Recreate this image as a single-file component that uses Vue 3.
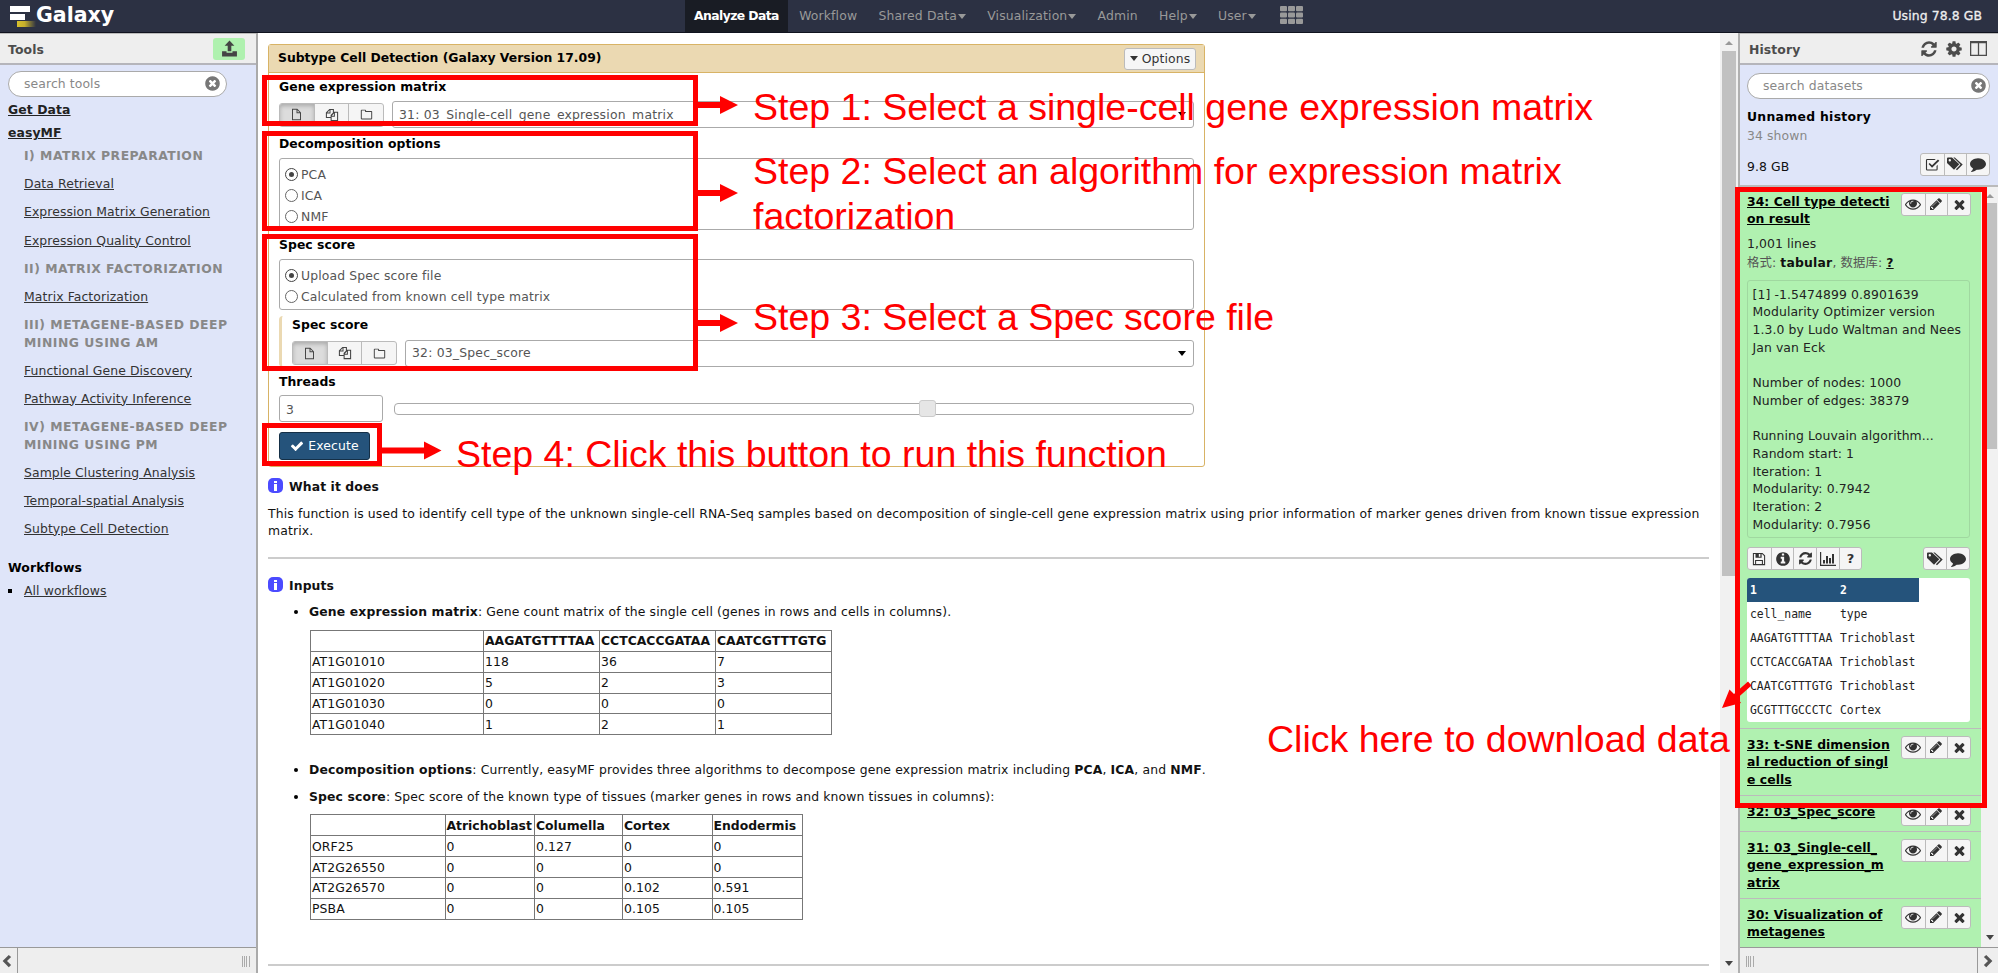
<script setup>
import { h } from 'vue'

const disc = 'm0 0M1664 896q0 209-103 385.5t-279.5 279.5-385.5 103-385.5-103-279.5-279.5-103-385.5 103-385.5 279.5-279.5 385.5-103 385.5 103 279.5 279.5 103 385.5z'
const big = {
  check: 'M1671 566q0 40-28 68l-724 724-136 136q-28 28-68 28t-68-28l-136-136-362-362q-28-28-28-68t28-68l136-136q28-28 68-28t68 28l294 295 656-657q28-28 68-28t68 28l136 136q28 28 28 68z',
  times: 'M1490 1322q0 40-28 68l-136 136q-28 28-68 28t-68-28l-294-294-294 294q-28 28-68 28t-68-28l-136-136q-28-28-28-68t28-68l294-294-294-294q-28-28-28-68t28-68l136-136q28-28 68-28t68 28l294 294 294-294q28-28 68-28t68 28l136 136q28 28 28 68t-28 68l-294 294 294 294q28 28 28 68z',
  pencil: 'M491 1536l91-91-235-235-91 91v107h128v128h107zm523-928q0-22-22-22-10 0-17 7l-542 542q-7 7-7 17 0 22 22 22 10 0 17-7l542-542q7-7 7-17zm-54-192l416 416-832 832h-416v-416zm683 96q0 53-37 90l-166 166-416-416 166-165q36-38 90-38 53 0 91 38l235 234q37 39 37 91z',
  eye: 'M1664 960q-152-236-381-353 61 104 61 225 0 185-131.5 316.5t-316.5 131.5-316.5-131.5-131.5-316.5q0-121 61-225-229 117-381 353 133 205 333.5 326.5t434.5 121.5 434.5-121.5 333.5-326.5zm-720-384q0-20-14-34t-34-14q-125 0-214.5 89.5t-89.5 214.5q0 20 14 34t34 14 34-14 14-34q0-86 61-147t147-61q20 0 34-14t14-34zm848 384q0 34-20 69-140 230-376.5 368.5t-499.5 138.5-499.5-139-376.5-368q-20-35-20-69t20-69q140-229 376.5-368t499.5-139 499.5 139 376.5 368q20 35 20 69z',
  comment: 'M1792 896q0 174-120 321.5t-326 233-450 85.5q-70 0-145-8-198 175-460 242-49 14-114 22-17 2-30.5-9t-17.5-29v-1q-3-4-.5-12t2-10 4.5-9.5l6-9 7-8.5 8-9q7-8 31-34.5t34.5-38 31-39.5 32.5-51 27-59 26-76q-157-89-247.5-220t-90.5-281q0-130 71-248.5t191-204.5 286-136.5 348-50.5q244 0 450 85.5t326 233 120 321.5z',
  refresh: 'M1639 1056q0 5-1 7-64 268-268 434.5t-478 166.5q-146 0-282.5-55t-243.5-157l-129 129q-19 19-45 19t-45-19-19-45v-448q0-26 19-45t45-19h448q26 0 45 19t19 45-19 45l-137 137q71 66 161 102t187 36q134 0 250-65t186-179q11-17 53-117 8-23 30-23h192q13 0 22.5 9.5t9.5 22.5zm25-800v448q0 26-19 45t-45 19h-448q-26 0-45-19t-19-45 19-45l138-138q-148-137-349-137-134 0-250 65t-186 179q-11 17-53 117-8 23-30 23h-199q-13 0-22.5-9.5t-9.5-22.5v-7q65-268 270-434.5t480-166.5q146 0 284 55.5t245 156.5l130-129q19-19 45-19t45 19 19 45z',
  cog: 'M1152 896q0-106-75-181t-181-75-181 75-75 181 75 181 181 75 181-75 75-181zm512-109v222q0 12-8 23t-20 13l-185 28q-19 54-39 91 35 50 107 138 10 12 10 25t-9 23q-27 37-99 108t-94 71q-12 0-26-9l-138-108q-44 23-91 38-16 136-29 186-7 28-36 28h-222q-14 0-24.5-8.5t-11.5-21.5l-28-184q-49-16-90-37l-141 107q-10 9-25 9-14 0-25-11-126-114-165-168-7-10-7-23 0-12 8-23 15-21 51-66.5t54-70.5q-27-50-41-99l-183-27q-13-2-21-12.5t-8-23.5v-222q0-12 8-23t19-13l186-28q14-46 39-92-40-57-107-138-10-12-10-24 0-10 9-23 26-36 98.5-107.5t94.5-71.5q13 0 26 10l138 107q44-23 91-38 16-136 29-186 7-28 36-28h222q14 0 24.5 8.5t11.5 21.5l28 184q49 16 90 37l142-107q9-9 24-9 13 0 25 10 129 119 165 170 7 8 7 22 0 12-8 23-15 21-51 66.5t-54 70.5q26 50 41 98l183 28q13 2 21 12.5t8 23.5z',
  clear: 'M1277 1122q0-26-19-45l-181-181 181-181q19-19 19-45 0-27-19-46l-90-90q-19-19-46-19-26 0-45 19l-181 181-181-181q-19-19-45-19-27 0-46 19l-90 90q-19 19-19 46 0 26 19 45l181 181-181 181q-19 19-19 45 0 27 19 46l90 90q19 19 46 19 26 0 45-19l181-181 181 181q19 19 45 19 27 0 46-19l90-90q19-19 19-46z' + disc,
  info: 'M1152 1376v-160q0-14-9-23t-23-9h-96v-512q0-14-9-23t-23-9h-320q-14 0-23 9t-9 23v160q0 14 9 23t23 9h96v320h-96q-14 0-23 9t-9 23v160q0 14 9 23t23 9h448q14 0 23-9t9-23zm-128-896v-160q0-14-9-23t-23-9h-192q-14 0-23 9t-9 23v160q0 14 9 23t23 9h192q14 0 23-9t9-23z' + disc
}
const small = {
  upload: 'M8 .5L12.6 5.300H9.700V10.500H6.300V5.300H3.400zM1 10.500H5.200V12H10.800V10.500H15V15.500H1z',
  file: 'M2.500 1H9L13.500 5.500V15H2.500zM3.700 2.200V13.800H12.300V6.500H8V2.200zM9.200 2.800V5.300H11.800z',
  files: 'M5 1H10.200V4.200H15V15H6.400V11.500H1V5zM5.200 2.600L2.700 5.200H5.200zM6.300 2.200V6.300H2.200V10.300H6.400V8L9 5.400V2.200zM10.200 6.400L7.800 8.800H10.200zM11.300 5.400V9.900H7.600V13.800H13.800V5.400z',
  folder: 'M1 3Q1 2 2 2H6.500Q7.500 2 7.500 3V3.700H14Q15 3.700 15 4.700V13Q15 14 14 14H2Q1 14 1 13zM2.200 3.200V12.800H13.800V4.900H6.300V3.200z',
  save: 'M1 1H12L15 4V15H1zM2.200 2.200V13.800H3.500V9H12.500V13.800H13.800V4.500L11.500 2.200H11V6.500H4V2.200zM7.800 2.200V5.300H9.600V2.200zM4.700 10.200V13.800H11.300V10.200z',
  chart: 'M0 1H1.200V13.800H16V15H0zM3 9H5V12.600H3zM6 5H8V12.600H6zM9 7H11V12.600H9zM12 3H14V12.600H12z',
  tags: 'M0 2.500Q0 1.500 1 1.500H5L12.300 8.300L7 13.800L0 7zM2.800 3A1.200 1.200 0 1 0 2.800 5.400A1.200 1.200 0 1 0 2.800 3zM6.300 1.500H7.800L15.700 8.500L10 14.300L8.900 13.300L13.500 8.500z',
  checkbox: 'M1 3.500Q1 2 2.500 2H11.500L10.200 3.200H2.200V13.300H12.300V9.500L13.500 8.300V13Q13.500 14.500 12 14.500H2.500Q1 14.500 1 13zM3.800 7.500L5 6.300L7.500 8.700L13.800 2.600L15.300 4L7.500 11.400z',
  columns: 'M0 1H16V15H0zM1.200 3V13.800H7.400V3zM8.600 3V13.800H14.800V3z',
  left: 'M10 1L12.700 3.500L8 8L12.700 12.500L10 15L3 8z',
  right: 'M6 1L3.300 3.500L8 8L3.300 12.500L6 15L13 8z'
}
const Icon = (p) =>
  h('svg', { viewBox: big[p.n] ? '0 0 1792 1792' : '0 0 16 16', fill: 'currentColor' }, [
    h('path', { d: big[p.n] || small[p.n], 'fill-rule': 'evenodd' })
  ])
Icon.props = ['n']

const tabs = [
  { t: 'Workflow' }, { t: 'Shared Data', c: 1 }, { t: 'Visualization', c: 1 },
  { t: 'Admin' }, { t: 'Help', c: 1 }, { t: 'User', c: 1 }
]
const tools = [
  { t: 'I) MATRIX PREPARATION', head: 1 },
  { t: 'Data Retrieval' }, { t: 'Expression Matrix Generation' }, { t: 'Expression Quality Control' },
  { t: 'II) MATRIX FACTORIZATION', head: 1 },
  { t: 'Matrix Factorization' },
  { t: 'III) METAGENE-BASED DEEP\nMINING USING AM', head: 1 },
  { t: 'Functional Gene Discovery' }, { t: 'Pathway Activity Inference' },
  { t: 'IV) METAGENE-BASED DEEP\nMINING USING PM', head: 1 },
  { t: 'Sample Clustering Analysis' }, { t: 'Temporal-spatial Analysis' }, { t: 'Subtype Cell Detection' }
]
const geneRows = [['AT1G01010', '118', '36', '7'], ['AT1G01020', '5', '2', '3'], ['AT1G01030', '0', '0', '0'], ['AT1G01040', '1', '2', '1']]
const specRows = [['ORF25', '0', '0.127', '0', '0'], ['AT2G26550', '0', '0', '0', '0'], ['AT2G26570', '0', '0', '0.102', '0.591'], ['PSBA', '0', '0', '0.105', '0.105']]
const info = `[1] -1.5474899 0.8901639
Modularity Optimizer version
1.3.0 by Ludo Waltman and Nees
Jan van Eck

Number of nodes: 1000
Number of edges: 38379

Running Louvain algorithm...
Random start: 1
Iteration: 1
Modularity: 0.7942
Iteration: 2
Modularity: 0.7956`
const peek = [['cell_name', 'type'], ['AAGATGTTTTAA', 'Trichoblast'], ['CCTCACCGATAA', 'Trichoblast'], ['CAATCGTTTGTG', 'Trichoblast'], ['GCGTTTGCCCTC', 'Cortex']]
const others = [
  { t: '33: t-SNE dimension\nal reduction of singl\ne cells', k: 'tall' },
  { t: '32: 03_Spec_score', k: 'short' },
  { t: '31: 03_Single-cell_\ngene_expression_m\natrix', k: 'tall' },
  { t: '30: Visualization of\nmetagenes', k: 'last' }
]
</script>

<template>
  <div class="page">
    <header class="masthead">
      <div class="brand">
        <svg class="logo" viewBox="0 0 26 22">
          <defs><linearGradient id="gold"><stop offset="0" stop-color="#d8c02c" /><stop offset=".4" stop-color="#c4ae2c" /><stop offset="1" stop-color="#2c3143" /></linearGradient></defs>
          <path fill="#fff" d="M0 0H20V6H0zM0 8H15V14H0z" /><path fill="url(#gold)" d="M7 15H26V21H7z" />
        </svg>
        <span>Galaxy</span>
      </div>
      <nav class="tabs">
        <span class="tab active">Analyze Data</span>
        <span v-for="x in tabs" :key="x.t" class="tab">{{ x.t }}<i v-if="x.c" class="caret"></i></span>
        <svg class="apps" viewBox="0 0 23 18"><template v-for="r in 3" :key="r"><rect v-for="c in 3" :key="c" :x="(c - 1) * 8" :y="(r - 1) * 6.4" width="7" height="5.2" rx="1" /></template></svg>
      </nav>
      <span class="quota">Using 78.8 GB</span>
    </header>

    <div class="columns">
      <aside class="left">
        <div class="phead"><b>Tools</b><span class="upload"><Icon n="upload" class="i17" /></span></div>
        <div class="lbody">
          <div class="search"><span>search tools</span><Icon n="clear" class="clr" /></div>
          <div class="section">Get Data</div>
          <div class="section">easyMF</div>
          <div v-for="x in tools" :key="x.t" :class="x.head ? 'thead' : 'tool'"><span>{{ x.t }}</span></div>
          <div class="wf">Workflows</div>
          <div class="allwf"><i></i><span>All workflows</span></div>
        </div>
        <footer class="pfoot"><span class="chev"><Icon n="left" class="i14" /></span><span class="grip"></span></footer>
      </aside>

      <main class="center">
        <div class="content">
          <section class="form">
            <div class="fhead"><b>Subtype Cell Detection (Galaxy Version 17.09)</b><span class="opt"><i class="caret"></i>Options</span></div>
            <div class="fbody">
              <div class="label">Gene expression matrix</div>
              <div class="row">
                <div class="trio"><span class="on"><Icon n="file" class="i13" /></span><span><Icon n="files" class="i14" /></span><span><Icon n="folder" class="i13" /></span></div>
                <div class="select">31: 03_Single-cell_gene_expression_matrix<i class="caret"></i></div>
              </div>
              <div class="label gap wide">Decomposition options</div>
              <div class="radios three">
                <div><i class="radio sel"></i>PCA</div><div><i class="radio"></i>ICA</div><div><i class="radio"></i>NMF</div>
              </div>
              <div class="label gap">Spec score</div>
              <div class="radios two">
                <div><i class="radio sel"></i>Upload Spec score file</div><div><i class="radio"></i>Calculated from known cell type matrix</div>
              </div>
              <div class="nested">
                <div class="label">Spec score</div>
                <div class="row">
                  <div class="trio"><span class="on"><Icon n="file" class="i13" /></span><span><Icon n="files" class="i14" /></span><span><Icon n="folder" class="i13" /></span></div>
                  <div class="select">32: 03_Spec_score<i class="caret"></i></div>
                </div>
              </div>
              <div class="label threads">Threads</div>
              <div class="row"><div class="num">3</div><div class="slider"><i class="knob"></i></div></div>
              <div class="exec"><Icon n="check" class="i14" />Execute</div>
            </div>
          </section>

          <h4 class="title first"><span class="inf"><i></i></span>What it does</h4>
          <p class="para">This function is used to identify cell type of the unknown single-cell RNA-Seq samples based on decomposition of single-cell gene expression matrix using prior information of marker genes driven from known tissue expression<br />matrix.</p>
          <hr />
          <h4 class="title"><span class="inf"><i></i></span>Inputs</h4>
          <div class="bullet b1"><b>Gene expression matrix</b>: Gene count matrix of the single cell (genes in rows and cells in columns).</div>
          <table class="grid gene">
            <tbody>
              <tr><th></th><th>AAGATGTTTTAA</th><th>CCTCACCGATAA</th><th>CAATCGTTTGTG</th></tr>
              <tr v-for="r in geneRows" :key="r[0]"><td v-for="(c, i) in r" :key="i">{{ c }}</td></tr>
            </tbody>
          </table>
          <div class="bullet b2"><b>Decomposition options</b>: Currently, easyMF provides three algorithms to decompose gene expression matrix including <b>PCA</b>, <b>ICA</b>, and <b>NMF</b>.</div>
          <div class="bullet b3"><b>Spec score</b>: Spec score of the known type of tissues (marker genes in rows and known tissues in columns):</div>
          <table class="grid spec">
            <tbody>
              <tr><th></th><th>Atrichoblast</th><th>Columella</th><th>Cortex</th><th>Endodermis</th></tr>
              <tr v-for="r in specRows" :key="r[0]"><td v-for="(c, i) in r" :key="i">{{ c }}</td></tr>
            </tbody>
          </table>
          <hr class="end" />
        </div>
        <div class="sbar main"><i class="up"></i><i class="thumb"></i><i class="down"></i></div>
      </main>

      <aside class="right">
        <div class="phead"><b>History</b><span class="hicons"><Icon n="refresh" class="i18" /><Icon n="cog" class="i18" /><Icon n="columns" class="i17" /></span></div>
        <div class="hinfo">
          <div class="search"><span>search datasets</span><Icon n="clear" class="clr" /></div>
          <div class="hname">Unnamed history</div>
          <div class="shown">34 shown</div>
          <div class="size"><span>9.8 GB</span><div class="btns"><span><Icon n="checkbox" class="i15" /></span><span><Icon n="tags" class="i16" /></span><span><Icon n="comment" class="i16" /></span></div></div>
        </div>
        <div class="hlist">
          <div class="items">
            <div class="item open">
              <div class="irow"><a>{{ '34: Cell type detecti\non result' }}</a><div class="btns"><span><Icon n="eye" class="i16" /></span><span><Icon n="pencil" class="i14" /></span><span><Icon n="times" class="i15" /></span></div></div>
              <div class="lines">1,001 lines</div>
              <div class="fmt">格式: <b>tabular</b>, 数据库: <b class="u">?</b></div>
              <pre class="info">{{ info }}</pre>
              <div class="acts">
                <div class="btns"><span><Icon n="save" class="i14" /></span><span><Icon n="info" class="i16" /></span><span><Icon n="refresh" class="i15" /></span><span><Icon n="chart" class="i16" /></span><span class="q">?</span></div>
                <div class="btns"><span><Icon n="tags" class="i16" /></span><span><Icon n="comment" class="i16" /></span></div>
              </div>
              <div class="peek">
                <div class="prow ph"><span>1</span><span>2</span></div>
                <div v-for="r in peek" :key="r[0]" class="prow"><span>{{ r[0] }}</span><span>{{ r[1] }}</span></div>
              </div>
            </div>
            <div v-for="x in others" :key="x.t" class="item" :class="x.k">
              <div class="irow"><a>{{ x.t }}</a><div class="btns"><span><Icon n="eye" class="i16" /></span><span><Icon n="pencil" class="i14" /></span><span><Icon n="times" class="i15" /></span></div></div>
            </div>
          </div>
          <div class="sbar side"><i class="up"></i><i class="thumb"></i><i class="down"></i></div>
        </div>
        <footer class="pfoot rev"><span class="grip"></span><span class="chev"><Icon n="right" class="i14" /></span></footer>
      </aside>
    </div>

    <svg class="marks" viewBox="0 0 1998 973">
      <g fill="none" stroke="#f00" stroke-width="5">
        <path d="M264.500 77.500H695.500V123.500H264.500zM264.500 133.500H695.500V228.500H264.500zM264.500 236.500H695.500V368.500H264.500zM264.500 425.500H379.500V463.500H264.500zM1737.500 189.500H1984.500V805.500H1737.500z" />
      </g>
      <g fill="#f00">
        <path v-for="y in [105, 193, 323]" :key="y" :d="`M698 ${y - 3}H720V${y - 9}L738 ${y}L720 ${y + 9}V${y + 3}H698z`" />
        <path d="M382 447.500H424V441.500L441.500 450.500L424 459.500V453.500H382z" />
        <path d="M1722 708L1729.500 689.500L1734 694L1748 681.500L1751.500 685.500L1737.500 698L1741 703z" />
      </g>
    </svg>
    <div class="note n1">Step 1: Select a single-cell gene expression matrix</div>
    <div class="note n2">Step 2: Select an algorithm for expression matrix<br />factorization</div>
    <div class="note n3">Step 3: Select a Spec score file</div>
    <div class="note n4">Step 4: Click this button to run this function</div>
    <div class="note n5">Click here to download data</div>
  </div>
</template>

<style>
body { margin: 0; overflow: hidden; }
</style>

<style scoped>
* { box-sizing: border-box; }
.page { position: relative; width: 1998px; height: 973px; overflow: hidden; display: flex; flex-direction: column; background: #fff; color: #111; font: 12.4px/17.7px "DejaVu Sans", "Noto Sans CJK SC", sans-serif; letter-spacing: .1px; white-space: nowrap; }
svg { display: block; flex: none; }
.i13 { width: 13px; height: 13px; } .i14 { width: 14px; height: 14px; } .i15 { width: 15px; height: 15px; } .i16 { width: 16px; height: 16px; } .i17 { width: 17px; height: 17px; } .i18 { width: 18px; height: 18px; }
.caret { display: inline-block; border: 4px solid transparent; border-top: 5px solid currentColor; border-bottom: 0; flex: none; }

.masthead { height: 33px; flex: none; background: #2c3143; border-bottom: 1px solid #10131f; display: flex; position: relative; color: #999; }
.brand { width: 685px; display: flex; align-items: flex-start; padding: 6px 0 0 10px; }
.logo { width: 26px; height: 22px; }
.brand span { margin-left: 0; font: bold 20.5px/18px "DejaVu Sans", sans-serif; color: #fff; letter-spacing: 0; }
.tabs { display: flex; height: 32px; line-height: 31px; letter-spacing: .14px; }
.tab { margin-left: 21.200px; }
.tab.active { margin: 0; width: 103px; margin-right: -10px; text-align: center; background: #191c24; color: #fff; font-weight: bold; letter-spacing: -.6px; }
.tab .caret { margin-left: 1px; vertical-align: 1px; }
.apps { width: 23px; height: 18px; margin: 6px 0 0 24px; fill: #999; }
.quota { margin-left: auto; margin-right: 16px; line-height: 31px; color: #eee; -webkit-text-stroke: .3px #eee; }

.columns { flex: 1; min-height: 0; display: flex; }
.phead { height: 32px; flex: none; background: #eee; border-top: 1px solid #bbb; border-bottom: 2px solid #b5b5bb; padding: 2px 0 0 8px; display: flex; align-items: center; color: #4c4c4c; }
.left { width: 258px; border-right: 2px solid #aaa; display: flex; flex-direction: column; background: #dfe5f9; }
.upload { margin: -2px 11px 0 auto; width: 32px; height: 22px; background: #aff1af; border-radius: 3px; display: flex; align-items: center; justify-content: center; color: #444; }
.lbody { flex: 1; padding: 6px 0 0 8px; }
.search { width: 219px; height: 26px; border: 1px solid #aaa; border-radius: 13px; background: #fff; display: flex; align-items: center; justify-content: space-between; padding: 0 5px 1px 15px; color: #888; }
.clr { width: 17px; height: 17px; color: #777; }
.section { margin-top: 5.3px; font-weight: bold; text-decoration: underline; color: #222; }
.search + .section { margin-top: 4.300px; }
.thead, .tool { margin: 5.300px 0 10.400px 16px; white-space: pre; }
.thead { font-weight: bold; color: #888; letter-spacing: .5px; }
.tool { margin-top: 0; text-decoration: underline; color: #333; }
.thead ~ .thead { margin-top: 0; }
.wf { margin-top: 21px; font-weight: bold; color: #000; }
.allwf { display: flex; align-items: center; margin-top: 5.500px; color: #333; text-decoration: underline; }
.allwf i { width: 4px; height: 4px; background: #000; margin: 0 12px 0 0; }
.pfoot { height: 26px; flex: none; background: #eee; border-top: 1px solid #999; display: flex; align-items: center; justify-content: space-between; color: #555; }
.chev { width: 18px; height: 25px; border-right: 1px solid #999; display: flex; align-items: center; justify-content: flex-start; }
.grip { width: 8px; height: 11px; margin: 2px 6px 0; background: repeating-linear-gradient(90deg, #aaa 0 1px, transparent 1px 2.200px); }
.rev .chev { width: 21px; border-right: 0; border-left: 1px solid #999; justify-content: center; }

.center { flex: 1; min-width: 0; display: flex; }
.content { width: 1451px; padding: 11px 0 0 10px; overflow: hidden; height: 940px; letter-spacing: .13px; }
.form { width: 937px; height: 423px; border: 1px solid #d8b365; border-radius: 3px; color: #555; }
.fhead { height: 28px; background: #ebd9b2; border-bottom: 1px solid #d8b365; padding: 0 8px 0 9px; display: flex; align-items: center; justify-content: space-between; color: #000; }
.fhead b { margin-top: -2px; letter-spacing: 0; }
.opt { height: 22px; width: 72px; border: 1px solid #bbb; border-radius: 3px; background: #f6f6f6; display: flex; align-items: center; justify-content: center; gap: 4px; color: #333; }
.fbody { padding: 5px 10px 0 10px; }
.label { height: 18px; line-height: 18px; font-weight: bold; color: #000; margin-bottom: 5px; letter-spacing: .05px; }
.label.gap { margin-top: 6px; }
.label.wide { margin-top: 7px; }
.label.threads { margin-top: 6px; margin-bottom: 4px; }
.row { display: flex; align-items: center; height: 27px; }
.trio { display: flex; width: 105px; height: 24px; border: 1px solid #bbb; border-radius: 3px; background: #f5f5f5; overflow: hidden; color: #444; margin-right: 8px; }
.trio span { flex: 1; display: flex; align-items: center; justify-content: center; border-left: 1px solid #bbb; }
.trio .on { background: #dcdcdc; border: 0; box-shadow: inset 0 2px 4px #aaa; }
.select { flex: 1; height: 27px; border: 1px solid #aaa; border-radius: 3px; padding: 0 7px 0 6px; display: flex; align-items: center; justify-content: space-between; letter-spacing: .2px; }
.select .caret { color: #000; }
.radios { border: 1px solid #aaa; border-radius: 3px; padding: 5.500px 0 0 5px; }
.radios div { height: 20.800px; display: flex; align-items: center; }
.three { height: 72px; } .two { height: 51px; }
.radio { width: 13px; height: 13px; border: 1px solid #666; border-radius: 50%; margin-right: 3px; display: flex; align-items: center; justify-content: center; }
.radio.sel { border-width: 1.500px; border-color: #444; }
.sel::after { content: ""; width: 5px; height: 5px; border-radius: 50%; background: #444; }
.nested { margin-top: 5.500px; height: 51.500px; border-left: 3px solid #ebd9b2; border-radius: 4px 0 0 4px; padding-left: 10px; }
.nested .label { margin-bottom: 6px; }
.num { width: 104px; height: 27px; border: 1px solid #aaa; border-radius: 3px; padding-left: 6px; line-height: 27px; margin-right: 11px; }
.slider { flex: 1; height: 12px; border: 1px solid #aaa; border-radius: 4px; display: flex; align-items: center; }
.knob { width: 17px; height: 17px; margin-left: 524px; border: 1px solid #ccc; border-radius: 3px; background: #e6e6e6; flex: none; }
.exec { width: 91px; height: 28px; margin-top: 10px; border: 1px solid #152f46; border-radius: 3px; background: #25537b; color: #fff; display: flex; align-items: center; justify-content: center; gap: 4px; }
.title { margin: 18px 0 0; height: 18px; display: flex; align-items: center; font-size: 12.400px; color: #111; letter-spacing: .1px; }
.title.first { margin-top: 10.500px; }
.inf { width: 15px; height: 15px; border-radius: 5px; background: #4b4bff; margin: -2px 6px 0 0; display: flex; flex-direction: column; align-items: center; justify-content: center; }
.inf::before { content: ""; width: 3px; height: 2px; background: #fff; margin-bottom: 1px; }
.inf i { width: 3px; height: 7px; background: #fff; }
.para { margin: 9px 0 0; height: 35.400px; }
hr { border: 0; height: 2px; background: #ccc; margin: 17px 0 0; width: 1441px; }
.bullet { height: 18px; padding-left: 41px; display: flex; align-items: center; white-space: pre; }
.bullet::before { content: ""; width: 4px; height: 4px; border-radius: 50%; background: #000; margin: 0 11px 0 -15px; }
.b1 { margin-top: 8px; } .b2 { margin-top: 26px; } .b3 { margin-top: 9px; }
.grid { margin-left: 42px; border-collapse: collapse; table-layout: fixed; border: 1px solid #333; letter-spacing: .1px; }
.grid td, .grid th { height: 20.900px; padding: 0 0 0 1px; border: 1px solid #777; text-align: left; line-height: 17px; }
.grid th { letter-spacing: 0; }
.grid tr { height: 20.900px; }
.gene { width: 522px; margin-top: 9px; }
.gene th:nth-child(1) { width: 173px; } .gene th:nth-child(2), .gene th:nth-child(3) { width: 116px; }
.spec { width: 493px; margin-top: 8px; }
.spec th:nth-child(1) { width: 134.500px; } .spec th:nth-child(2), .spec th:nth-child(4) { width: 89.500px; } .spec th:nth-child(3) { width: 88px; }
.end { margin-top: 44px; }

.sbar { background: #f1f1f1; display: flex; flex-direction: column; align-items: center; }
.sbar i { flex: none; }
.up { border: 4px solid transparent; border-top: 0; border-bottom: 4px solid #999; }
.down { border: 4px solid transparent; border-bottom: 0; border-top: 5px solid #444; margin-top: auto; }
.thumb { width: 14px; background: #c1c1c1; }
.main { width: 18px; margin-left: auto; padding: 8px 0 7px; }
.main .thumb { margin-top: 6px; height: 525px; }

.right { width: 260px; border-left: 2px solid #b0b0b0; display: flex; flex-direction: column; background: #dfe5f9; }
.right .phead { padding-left: 9px; }
.hicons { margin: -2px 11px 0 auto; display: flex; align-items: center; gap: 7px; }
.hinfo { height: 122px; flex: none; padding: 8px 8px 0 7px; border-bottom: 2px solid #bbb; }
.hinfo .search { width: 243px; padding-right: 2px; }
.hname { margin-top: 9px; font-weight: bold; color: #000; letter-spacing: .3px; }
.shown { margin-top: 1.500px; color: #888; }
.size { display: flex; justify-content: space-between; align-items: center; margin-top: 8px; height: 23px; }
.size > span { margin-top: 4px; }
.btns { display: flex; height: 23px; border: 1px solid #bbb; border-radius: 3px; background: #f5f5f5; flex: none; color: #333; }
.btns span { width: 22.700px; display: flex; align-items: center; justify-content: center; border-left: 1px solid #bbb; }
.btns span:first-child { border: 0; }
.btns .q { font: bold 13px "DejaVu Sans", sans-serif; }
.hlist { flex: 1; min-height: 0; display: flex; }
.items { width: 241px; background: #b0f1b0; overflow: hidden; color: #222; }
.item { border-bottom: 1.500px solid #bbb; padding: 6.500px 10px 0 7px; }
.irow { display: flex; justify-content: space-between; align-items: flex-start; }
.irow a { white-space: pre; font-weight: bold; text-decoration: underline; color: #000; letter-spacing: .05px; }
.item.open { height: 542px; padding-top: 5.500px; }
.tall { height: 67px; } .short { height: 36px; } .last { border: 0; }
.lines { margin-top: 7px; } .fmt { margin-top: 1.500px; height: 18px; color: #555; }
.fmt b { color: #111; letter-spacing: .2px; } .u { text-decoration: underline; }
.info { margin: 8px 0 9px; width: 223px; height: 258px; border: 1px solid #a0d8a0; border-radius: 3px; padding: 4.500px; font: inherit; }
.acts { display: flex; justify-content: space-between; width: 223px; height: 23px; }
.peek { margin-top: 8px; width: 223px; height: 144px; background: #fff; border-radius: 3px; overflow: hidden; font: 11.400px/24px "DejaVu Sans Mono", monospace; letter-spacing: 0; }
.prow { display: flex; height: 24px; width: 172px; padding-left: 3px; }
.prow span:first-child { width: 90px; }
.ph { background: #25537b; color: #fff; font-weight: bold; }
.side { width: 17px; padding: 7px 0 7px; }
.side .thumb { margin-top: 5px; height: 246px; }

.marks { position: absolute; left: 0; top: 0; width: 1998px; height: 973px; }
.note { position: absolute; font: 37.500px/45.300px "Liberation Sans", Arial, sans-serif; letter-spacing: 0; color: #f00; }
.n1 { left: 753px; top: 85px; } .n2 { left: 753px; top: 149px; } .n3 { left: 753px; top: 295px; }
.n4 { left: 456px; top: 432px; } .n5 { left: 1267px; top: 717px; }
</style>
